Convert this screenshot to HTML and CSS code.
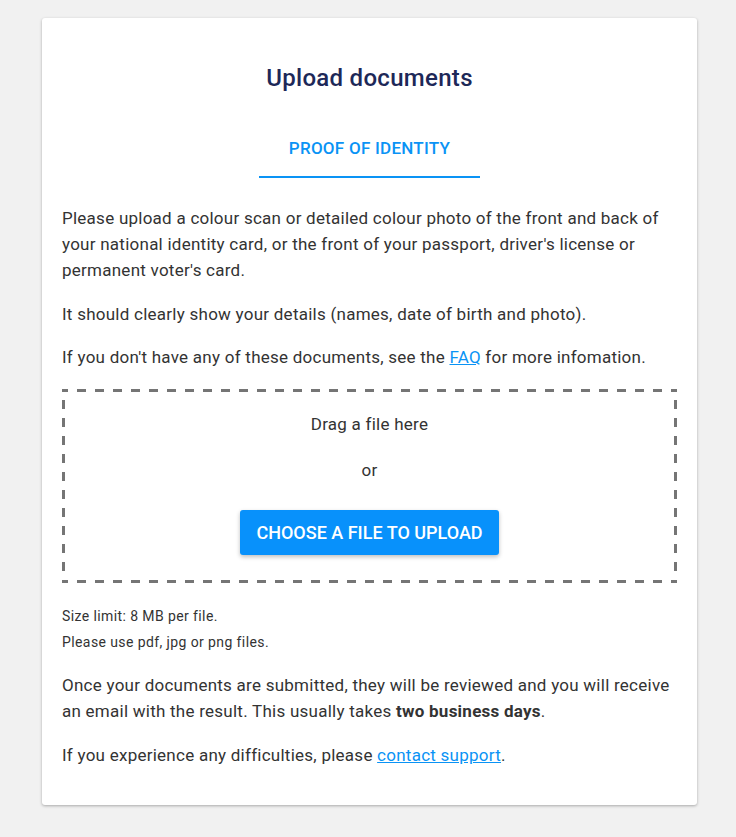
FILE: index.html
```html
<!DOCTYPE html>
<html lang="en">
<head>
<meta charset="utf-8">
<title>Upload documents</title>
<link rel="stylesheet" href="styles.css">
</head>
<body>
<main class="card">
  <h1 class="title">Upload documents</h1>
  <div class="tab">PROOF OF IDENTITY</div>
  <p class="text">Please upload a colour scan or detailed colour photo of the front and back of your national identity card, or the front of your passport, driver's license or permanent voter's card.</p>
  <p class="text">It should clearly show your details (names, date of birth and photo).</p>
  <p class="text">If you don't have any of these documents, see the <a class="link" href="#">FAQ</a> for more infomation.</p>
  <div class="dropzone">
    <div class="drop-line">Drag a file here</div>
    <div class="drop-or">or</div>
    <button class="upload-btn" type="button">CHOOSE A FILE TO UPLOAD</button>
  </div>
  <div class="limits">
    <div class="small">Size limit: 8 MB per file.</div>
    <div class="small">Please use pdf, jpg or png files.</div>
  </div>
  <p class="text">Once your documents are submitted, they will be reviewed and you will receive an email with the result. This usually takes <strong>two business days</strong>.</p>
  <p class="text last">If you experience any difficulties, please <a class="link" href="#">contact support</a>.</p>
</main>
</body>
</html>
```
FILE: styles.css
```css
html, body {
  margin: 0;
  padding: 0;
  background: #f1f1f1;
}
body {
  font-family: Roboto, "Liberation Sans", sans-serif;
  color: #333333;
  padding-top: 18px;
  padding-bottom: 32px;
}
.card {
  width: 655px;
  margin-left: 42px;
  box-sizing: border-box;
  background: #ffffff;
  border-radius: 3px;
  box-shadow: 0 1px 3px rgba(0,0,0,0.3);
  padding: 45px 20px 20px;
}
.title {
  margin: 0;
  text-align: center;
  font-size: 24px;
  line-height: 30px;
  font-weight: 500;
  letter-spacing: 0.3px;
  color: #1d2858;
}
.tab {
  width: 221px;
  margin: 33px auto 27px;
  padding: 12px 0 18px;
  text-align: center;
  font-size: 17px;
  line-height: 20px;
  font-weight: 500;
  letter-spacing: 0.25px;
  color: #0a93f5;
  border-bottom: 2px solid #0a93f5;
}
.text {
  margin: 0 0 17.5px;
  font-size: 17px;
  line-height: 26px;
  letter-spacing: 0.25px;
}
.text.last {
  margin-bottom: 17px;
}
.link {
  color: #0a93f5;
  text-decoration: underline;
}
.dropzone {
  margin-top: 19px;
  border: 3px solid transparent;
  background-origin: border-box;
  background-image:
    repeating-linear-gradient(90deg, #757575 0 6px, transparent 6px 15px, #757575 15px 18px),
    repeating-linear-gradient(90deg, #757575 0 6px, transparent 6px 15px, #757575 15px 18px),
    repeating-linear-gradient(180deg, #757575 0 2px, transparent 2px 11px, #757575 11px 18px),
    repeating-linear-gradient(180deg, #757575 0 2px, transparent 2px 11px, #757575 11px 18px);
  background-size: 100% 3px, 100% 3px, 3px 100%, 3px 100%;
  background-position: left top, left bottom, left top, right top;
  background-repeat: no-repeat;
  padding: 19px 0 25px;
  display: flex;
  flex-direction: column;
  align-items: center;
  font-size: 17px;
  line-height: 26px;
  letter-spacing: 0.25px;
}
.drop-or {
  margin-top: 20px;
}
.upload-btn {
  margin-top: 27px;
  height: 45px;
  padding: 0 16px;
  border: 0;
  border-radius: 3px;
  background: #0891fb;
  color: #ffffff;
  font-family: Roboto, "Liberation Sans", sans-serif;
  font-size: 18px;
  font-weight: 500;
  letter-spacing: 0;
  box-shadow: 0 2px 4px rgba(0,0,0,0.25);
}
.limits {
  margin: 20px 0 17px;
}
.small {
  font-size: 14px;
  line-height: 26px;
  letter-spacing: 0.4px;
}
```
